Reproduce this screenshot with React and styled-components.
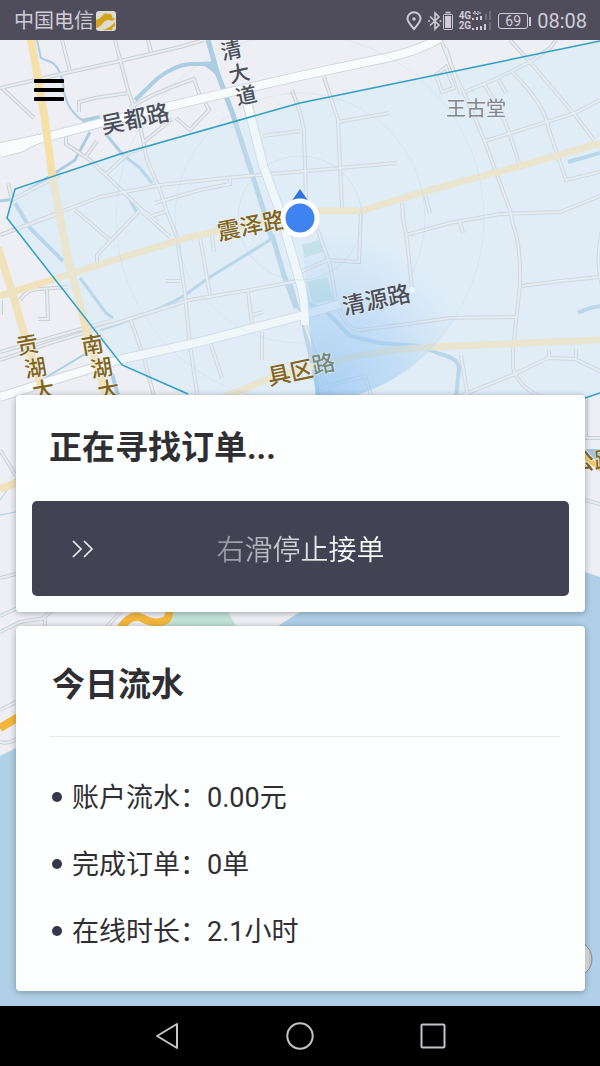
import React from "react";
import styled, { createGlobalStyle } from "styled-components";

const GlobalStyles = createGlobalStyle`
  * {
    box-sizing: border-box;
  }

  body {
    margin: 0;
    background: #000;
    font-family: Roboto, "Noto Sans CJK SC", sans-serif;
    color: #2f2f33;
  }

  button {
    border: 0;
    padding: 0;
    background: none;
    color: inherit;
    font: inherit;
    cursor: pointer;
  }
`;

const Screen = styled.div`
  display: flex;
  flex-direction: column;
  min-height: 100vh;
`;

const StatusBar = styled.header`
  display: flex;
  align-items: center;
  justify-content: space-between;
  height: 40px;
  padding: 2px 13px 0 14px;
  background: #4f4c5c;
  color: #cfccd8;
`;

const StatusGroup = styled.div`
  display: flex;
  align-items: center;
  gap: ${({ $gap }) => $gap}px;
`;

const Carrier = styled.span`
  font-size: 20px;
  line-height: 24px;
`;

const Networks = styled.div`
  display: flex;
  flex-direction: column;
  font-size: 10px;
  font-weight: 700;
  line-height: 10px;
`;

const BatteryLevel = styled.div`
  display: flex;
  align-items: center;
  gap: 1px;

  span {
    width: 30px;
    border: 1px solid currentColor;
    border-radius: 3px;
    font-size: 14px;
    line-height: 14px;
    text-align: center;
  }

  &::after {
    content: "";
    width: 2px;
    height: 9px;
    background: currentColor;
  }
`;

const Clock = styled.time`
  font-size: 20px;
  line-height: 24px;
`;

const Main = styled.main`
  position: relative;
  flex: 1;
  display: flex;
  flex-direction: column;
  padding: 32px 15px 15px 16px;
  overflow: hidden;
`;

const MapLayer = styled.svg`
  position: absolute;
  inset: 0;
  width: 100%;
  height: 100%;
`;

const MenuButton = styled.button`
  position: relative;
  display: flex;
  flex-direction: column;
  gap: 5px;
  width: 46px;
  padding: 7px 8px;
  margin-left: 10px;
`;

const MenuLine = styled.span`
  height: 4px;
  border-radius: 1px;
  background: #000;
`;

const Panels = styled.div`
  position: relative;
  display: flex;
  flex-direction: column;
  gap: 14px;
  margin-top: auto;
`;

const Card = styled.section`
  padding: ${({ $padding }) => $padding};
  border-radius: 4px;
  background: #fdfefe;
  box-shadow: 0 1px 6px rgba(40, 50, 60, 0.4);
`;

const Title = styled.h2`
  margin: 0;
  padding: 0 2px;
  font-size: 33px;
  font-weight: 700;
  line-height: 40px;
`;

const SearchTitle = styled(Title)`
  padding: 0 17px;
  margin-bottom: 33px;
`;

const SlideButton = styled.button`
  display: grid;
  grid-template-columns: 1fr auto 1fr;
  align-items: center;
  width: 100%;
  height: 95px;
  padding: 0 40px;
  border-radius: 5px;
  background: #424253;

  svg {
    display: block;
  }
`;

const SlideText = styled.span`
  padding-top: 4px;
  font-size: 28px;
  font-weight: 350;
  line-height: 40px;
  color: transparent;
  background: linear-gradient(90deg, #8f8f9c, #fff 75%);
  background-clip: text;
`;

const Divider = styled.hr`
  width: 100%;
  height: 1px;
  margin: 31px 0 26px;
  border: 0;
  background: #e6e9ed;
`;

const Stats = styled.ul`
  margin: 0;
  padding: 0 2px;
  list-style: none;
`;

const Stat = styled.li`
  display: flex;
  align-items: center;
  gap: 10px;
  font-size: 27px;
  line-height: 63px;

  &::before {
    content: "";
    width: 10px;
    height: 10px;
    border-radius: 50%;
    background: #33384a;
  }

  span {
    padding-top: 4px;
  }
`;

const NavBar = styled.nav`
  display: flex;
  height: 60px;
  padding: 0 calc(100% / 6);
  background: #000;
`;

const NavButton = styled.button`
  flex: 1;
  display: flex;
  align-items: center;
  justify-content: center;
`;

const streets = [
  "M0 88 L70 72 L120 61 L180 47 L204 40",
  "M62 40 L70 71",
  "M115 40 L128 90 L140 125 L147 160 L160 190 L168 215 L177 237 L185 295 L190 345 L198 400",
  "M148 40 L151 52",
  "M2 88 L34 118",
  "M79 112 V102 L95 98 L128 93",
  "M130 108 Q150 94 194 79 L200 96",
  "M144 142 L172 119",
  "M176 118 L190 130 L209 110 L204 100",
  "M66 135 L66 144 L90 160 L140 208 L158 222",
  "M85 158 L97 141",
  "M106 174 L130 152 L145 148",
  "M37 221 L100 197 L160 185 L225 178 L260 175 L340 168 L397 163",
  "M155 203 L200 190 L230 184 V179",
  "M8 183 L12 200 L60 175",
  "M75 210 L110 240",
  "M97 262 V255 L140 210 L170 237",
  "M152 216 L167 211",
  "M0 235 L30 224 L58 214",
  "M263 136 L300 131",
  "M292 90 L300 112 L304 130 L306 200",
  "M324 77 L338 120 L340 165 L342 208",
  "M338 122 L389 113",
  "M441 40 L455 75 L465 95 L485 142 L497 175 L510 210 L513 225 Q521 245 520 285 L513 350 V368 Q520 390 545 398",
  "M446 48 L461 94",
  "M436 75 L446 67 L454 88 L442 92 Z",
  "M465 92 L500 77 L530 62 L550 48 L556 40",
  "M484 84 L500 110 L510 135 L519 163",
  "M499 80 L506 93",
  "M512 72 Q545 104 549 130 L566 180 L600 172",
  "M510 40 L530 62 L575 115 L594 140",
  "M485 141 L540 124 L575 113 L600 100",
  "M402 203 L404 225",
  "M425 195 L430 213",
  "M406 235 L450 223 L500 214 L560 212 L600 196",
  "M402 212 L407 240 L412 288",
  "M460 222 L463 233",
  "M522 286 L560 281 L600 277",
  "M602 230 Q595 260 602 285",
  "M336 300 Q345 331 360 330 L400 325 L450 318 L516 317",
  "M316 225 L330 265 L336 300",
  "M300 272 L328 260 L359 262 L361 212",
  "M461 355 L468 398",
  "M455 398 L515 374 L548 358 L575 359 L602 372",
  "M549 350 V358",
  "M576 349 V358",
  "M305 325 L330 398",
  "M320 388 L365 376 L372 398",
  "M0 360 L50 343 L110 325 L190 300 L250 290 L297 281",
  "M0 352 L60 335 L110 321",
  "M130 318 L143 355 L155 400",
  "M200 238 L210 295",
  "M212 235 L214 252",
  "M248 291 L252 325 M252 315 L263 312",
  "M262 332 V360",
  "M211 345 L222 378",
  "M166 281 L180 281",
  "M20 300 Q28 288 40 289 L68 287",
  "M47 290 L48 319 H38",
  "M1 300 V315",
  "M0 450 L16 476",
  "M0 578 L16 574",
  "M0 616 L20 607",
  "M0 632 L20 622 L45 618 L45 630 M40 620 L56 608",
  "M104 630 L124 608",
  "M0 710 L20 700",
  "M0 742 Q10 745 20 736",
  "M585 438 H600",
  "M586 398 V438",
  "M585 500 L600 504",
];

const rivers = [
  { d: "M37 40 L41 58 L53 63 Q63 72 64 92 Q68 112 85 122", width: 2 },
  { d: "M82 121 L100 117", width: 4 },
  { d: "M135 100 L158 78 Q175 65 190 64 H212", width: 4 },
  { d: "M208 40 L217 72 L232 112 L262 205 L272 240", width: 5 },
  { d: "M0 201 L15 199 L75 160 L90 132", width: 3 },
  { d: "M105 133 L123 155 L140 168 L152 183", width: 3 },
  { d: "M15 203 L30 228 L63 261", width: 4 },
  { d: "M80 278 L106 313 L113 318", width: 3 },
  { d: "M270 240 L210 277 L185 295 Q160 311 100 330", width: 3 },
  { d: "M45 378 L85 354", width: 2 },
  { d: "M272 235 L284 275 L296 308", width: 5 },
  { d: "M302 318 L320 400", width: 4 },
  { d: "M300 300 L327 312 L350 336 L380 343 L420 346 L440 354 Q458 358 459 368 L456 398", width: 4 },
  { d: "M130 200 L138 215", width: 3 },
  { d: "M568 162 L600 153", width: 4 },
  { d: "M578 313 Q588 307 602 306", width: 4 },
  { d: "M112 374 L118 395", width: 4 },
  { d: "M0 515 L16 512", width: 1 },
  { d: "M0 500 L16 478", width: 1 },
];

const whiteRoads = [
  "M0 147 L35 140 L100 123 L200 99 L300 76 L390 57 Q420 50 440 38",
  "M0 153 L20 148 L40 138",
  "M247 102 L263 165 L278 206 L300 282 Q306 300 305 325",
  "M0 397 L60 378 L122 359 L195 343 L300 316 L340 304",
];

const yellowRoads = [
  { d: "M31 38 L45 120 L52 175 L68 260 L92 350 L108 400", width: 8 },
  { d: "M0 296 L80 271 L130 255 L190 237 L222 230 L300 214 L320 211 H360 L430 190 L520 166 L600 143", width: 7 },
  { d: "M-2 248 L13 295 L26 340 L46 400", width: 8 },
  { d: "M218 400 L270 378 L330 362 Q380 350 430 347 L600 340", width: 7 },
  { d: "M0 489 L18 482", width: 8 },
];

const labels = [
  { text: "吴都路", x: 135, y: 117, rotate: -12, size: 23 },
  { text: "震泽路", x: 251, y: 224, rotate: -11, size: 23, color: "#81651d" },
  { text: "清源路", x: 376, y: 298, rotate: -12, size: 23 },
  { text: "具区", x: 290, y: 371, rotate: -12, size: 23, color: "#81651d" },
  { text: "路", x: 323, y: 362, rotate: -12, size: 23, color: "#738a7d" },
  { text: "王古堂", x: 476, y: 107, size: 20, color: "#7d858d" },
  { text: "清", x: 231, y: 49, rotate: -12, size: 21 },
  { text: "大", x: 239, y: 72, rotate: -12, size: 21 },
  { text: "道", x: 246, y: 94, rotate: -12, size: 21 },
  { text: "贡", x: 27, y: 343, rotate: -10, size: 22, color: "#81651d" },
  { text: "湖", x: 35, y: 366, rotate: -10, size: 22, color: "#81651d" },
  { text: "大", x: 43, y: 388, rotate: -10, size: 22, color: "#81651d" },
  { text: "南", x: 92, y: 343, rotate: -10, size: 22, color: "#81651d" },
  { text: "湖", x: 101, y: 366, rotate: -10, size: 22, color: "#81651d" },
  { text: "大", x: 108, y: 388, rotate: -10, size: 22, color: "#81651d" },
  { text: "公路", x: 594, y: 459, rotate: -4, size: 23, color: "#81651d" },
];

const zone =
  "M600 41 L470 68 L300 103 L275 110 L120 154 L15 189 L7 218 L122 365 L188 394 L300 440 L585 398 L600 393";

function CityMap() {
  return (
    <MapLayer viewBox="0 40 600 966" preserveAspectRatio="xMidYMin slice" aria-hidden="true">
      <defs>
        <radialGradient id="beam" gradientUnits="userSpaceOnUse" cx="318" cy="396" r="165">
          <stop offset="0" stopColor="#93c5f2" stopOpacity="0.75" />
          <stop offset="0.5" stopColor="#9dcaf3" stopOpacity="0.45" />
          <stop offset="1" stopColor="#a8d0f4" stopOpacity="0" />
        </radialGradient>
        <linearGradient id="knob">
          <stop offset="0.8" stopColor="#f4f4f4" />
          <stop offset="1" stopColor="#b5b8ba" />
        </linearGradient>
      </defs>

      <rect y="40" width="600" height="966" fill="#eeeff4" />
      <path d={zone} fill="#e2eef7" />

      {/* lake and park */}
      <path d="M0 756 L16 748 L278 626 L300 612 L440 540 L585 572 L600 577 V1006 H0 Z" fill="#afd0e6" />
      <path d="M172 606 H225 L238 630 H160 Z" fill="#c2e2d7" />
      <path d="M302 245 L319 240 L324 252 L305 257 Z M307 282 L327 277 L334 300 L313 304 Z" fill="#bfe0e0" />

      <g fill="none" stroke="#accee3" strokeLinejoin="round">
        {rivers.map((river) => (
          <path key={river.d} d={river.d} strokeWidth={river.width} />
        ))}
        <path d="M205 62 Q216 64 214 54 L222 84 Q216 72 205 66 Z" fill="#accee3" />
        <path d="M291 280 L300 312 L291 300 Z" fill="#accee3" />
      </g>

      <g fill="none" stroke="#ccd0d5" strokeWidth="4">
        {streets.map((d) => (
          <path key={d} d={d} />
        ))}
      </g>
      <g fill="none" stroke="#e8edf2" strokeWidth="2">
        {streets.map((d) => (
          <path key={d} d={d} />
        ))}
      </g>

      <g fill="none" stroke="#d0d7dd" strokeWidth="10">
        {whiteRoads.map((d) => (
          <path key={d} d={d} />
        ))}
      </g>
      <g fill="none" stroke="#f9fcfd" strokeWidth="8">
        {whiteRoads.map((d) => (
          <path key={d} d={d} />
        ))}
      </g>
      <circle cx="412" cy="290" r="3" fill="#fff" />

      <g fill="none" stroke="#f0e2bd">
        {yellowRoads.map((road) => (
          <path key={road.d} d={road.d} strokeWidth={road.width} />
        ))}
      </g>
      <path d="M30 38 L45 120 L52 175" fill="none" stroke="#f7dfa5" strokeWidth="6" />
      <path
        d="M118 632 Q130 612 142 618 Q156 626 166 620 Q171 615 168 606 M0 728 L20 716"
        fill="none"
        stroke="#f3b63b"
        strokeWidth="8"
      />
      <path d="M586 449 H600 V466 Z" fill="#9fc4e0" />
      <path d="M584 456 L602 470" stroke="#f3c760" strokeWidth="5" />

      <path d={zone} fill="#dcecf8" fillOpacity="0.3" />
      <path d={zone.replace("L300 440 L585 398", "M585 398")} fill="none" stroke="#2f9fc5" strokeWidth="1.5" />

      {/* heading beam and pulse rings round the driver */}
      <path d="M300 218 L316 400 H340 A184 184 0 0 0 484 218 Z" fill="url(#beam)" />
      <circle cx="300" cy="218" r="184" fill="none" stroke="#b9d4e6" strokeOpacity="0.3" />
      <circle cx="300" cy="218" r="125" fill="none" stroke="#b9d4e6" strokeOpacity="0.3" />
      <circle cx="300" cy="218" r="62" fill="none" stroke="#b9d4e6" strokeOpacity="0.4" />

      <g
        fontFamily='"Noto Sans CJK SC", sans-serif'
        textAnchor="middle"
        dominantBaseline="central"
        stroke="#f3f6f9"
        strokeWidth="1"
        paintOrder="stroke"
      >
        {labels.map(({ text, x, y, size, rotate = 0, color = "#4a505b" }) => (
          <text
            key={text + x}
            x={x}
            y={y}
            fontSize={size}
            fontWeight={text === "王古堂" ? 400 : 500}
            fill={color}
            transform={`rotate(${rotate} ${x} ${y})`}
          >
            {text}
          </text>
        ))}
      </g>

      <path d="M300 189 L309 202 H291 Z" fill="#2f74e0" />
      <circle cx="300" cy="218" r="17" fill="#3f83f1" stroke="#fff" strokeWidth="5" />
      <circle cx="574" cy="959" r="18" fill="url(#knob)" stroke="#858b90" strokeWidth="1" />
    </MapLayer>
  );
}

function PhoneStatus() {
  return (
    <StatusBar>
      <StatusGroup $gap={2}>
        <Carrier>中国电信</Carrier>
        <svg width="20" height="20" viewBox="0 0 20 20">
          <rect width="20" height="20" rx="3" fill="#e0dbd0" />
          <path d="M0 9 Q5 7 7 4 Q9 1 12 3 Q16 2 16 6 L19 8 Q17 11 13 9 Q9 9 7 12 Q5 15 1 17 Q0 17 0 15Z" fill="#d0a51c" />
          <path d="M7 19 Q14 17 19 11 V16 Q17 14 16 19Z" fill="#d0a51c" />
        </svg>
      </StatusGroup>

      <StatusGroup $gap={6}>
        <svg width="16" height="20" viewBox="0 0 16 20" fill="none" stroke="currentColor" strokeWidth="2">
          <path d="M8 18 C5.5 14.5 1.5 11.5 1.5 7.6 A6.5 6.3 0 0 1 14.5 7.6 C14.5 11.5 10.5 14.5 8 18Z" />
          <circle cx="8" cy="8" r="1.7" fill="currentColor" stroke="none" />
        </svg>
        <svg width="25" height="20" viewBox="0 0 25 20" fill="none" stroke="currentColor" strokeWidth="1.6">
          <path d="M2 5.5 L11 14 L7 18 V2 L11 6 L2 14.5" />
          <path d="M0 10 H2 M11.5 10 H13.5" />
          <rect x="15.5" y="3.5" width="9" height="15" rx="1" strokeWidth="1" />
          <path d="M17 5 H23 V17 H17Z" fill="currentColor" stroke="none" />
          <path d="M17.5 1.5 H22.5" />
        </svg>
        <StatusGroup $gap={1}>
          <Networks>
            <span>4G</span>
            <span>2G</span>
          </Networks>
          <svg width="20" height="20" viewBox="0 0 20 20" fill="currentColor">
            <path d="M0 7h2v2H0z M4 6h2v3H4z M8 5h2v4H8z M0 17h2v2H0z M4 16h2v3H4z M8 15h2v4H8z M12 13h2v6h-2z" />
            <path d="M1 3 L3 0 V4 M6 0 V4 L4 2 M7 2 H9" fill="none" stroke="currentColor" strokeWidth="1" />
            <path d="M13 3h2v6h-2z M17 0h2v9h-2z M17 11h2v8h-2z" opacity="0.25" />
          </svg>
        </StatusGroup>
        <BatteryLevel>
          <span>69</span>
        </BatteryLevel>
        <Clock>08:08</Clock>
      </StatusGroup>
    </StatusBar>
  );
}

const stats = ["账户流水：0.00元", "完成订单：0单", "在线时长：2.1小时"];

function App() {
  return (
    <Screen>
      <GlobalStyles />
      <PhoneStatus />

      <Main>
        <CityMap />
        <MenuButton type="button" aria-label="菜单">
          <MenuLine />
          <MenuLine />
          <MenuLine />
        </MenuButton>

        <Panels>
          <Card $padding="33px 16px 16px">
            <SearchTitle>正在寻找订单...</SearchTitle>
            <SlideButton type="button">
              <svg width="22" height="18" viewBox="0 0 22 18" fill="none" stroke="#eeeef4" strokeWidth="1.7">
                <path d="M1 1 L9 9 L1 17 M12 1 L20 9 L12 17" />
              </svg>
              <SlideText>右滑停止接单</SlideText>
            </SlideButton>
          </Card>

          <Card $padding="39px 25px 27px 34px">
            <Title>今日流水</Title>
            <Divider />
            <Stats>
              {stats.map((stat) => (
                <Stat key={stat}>
                  <span>{stat}</span>
                </Stat>
              ))}
            </Stats>
          </Card>
        </Panels>
      </Main>

      <NavBar>
        <NavButton type="button" aria-label="返回">
          <svg width="24" height="28" viewBox="0 0 24 28" fill="none" stroke="#c6c2c8" strokeWidth="2">
            <path d="M22 2 V26 L2 14 Z" strokeLinejoin="round" />
          </svg>
        </NavButton>
        <NavButton type="button" aria-label="主屏幕">
          <svg width="28" height="28" viewBox="0 0 28 28" fill="none" stroke="#c6c2c8" strokeWidth="2">
            <circle cx="14" cy="14" r="12.7" />
          </svg>
        </NavButton>
        <NavButton type="button" aria-label="最近任务">
          <svg width="26" height="26" viewBox="0 0 26 26" fill="none" stroke="#c6c2c8" strokeWidth="2">
            <rect x="1.5" y="1.5" width="23" height="23" rx="1" />
          </svg>
        </NavButton>
      </NavBar>
    </Screen>
  );
}

export default App;
